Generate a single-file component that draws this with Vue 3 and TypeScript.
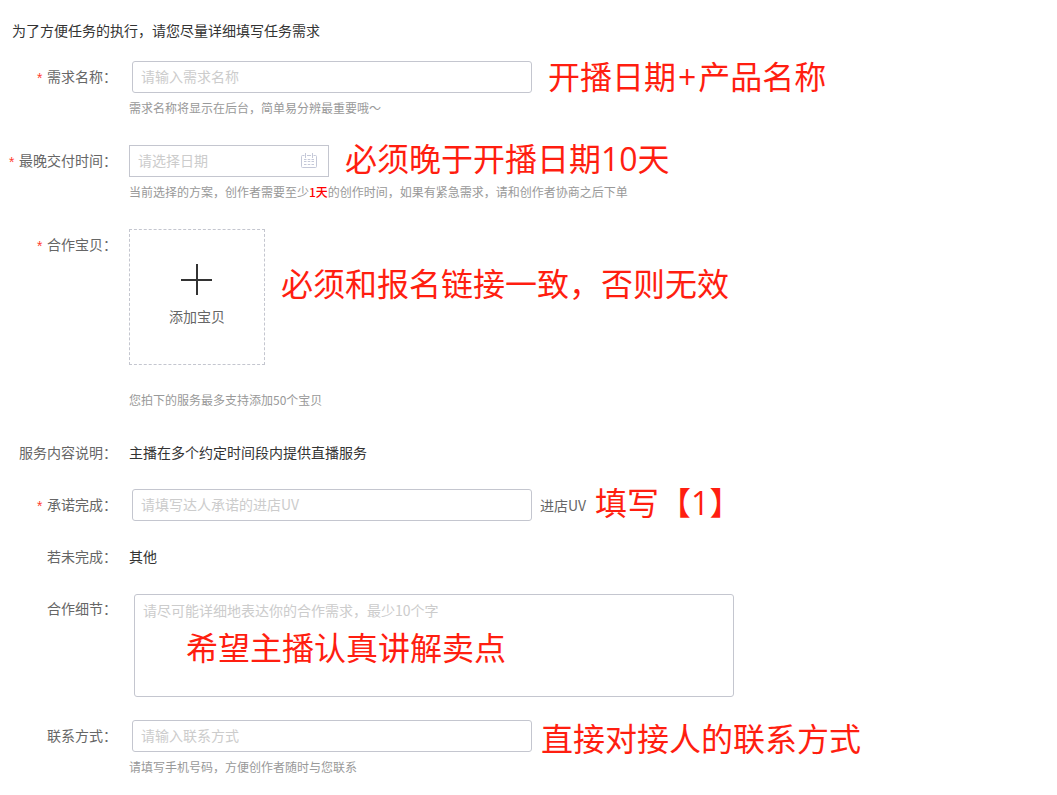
<script setup lang="ts">
import { ref } from 'vue'

const name = ref('')
const date = ref('')
const promise = ref('')
const detail = ref('')
const contact = ref('')
</script>

<template>
  <form class="page" lang="zh-CN" @submit.prevent>
    <p class="intro">为了方便任务的执行，请您尽量详细填写任务需求</p>

    <div class="item">
      <label class="label" for="name"><span class="star">*</span>需求名称：</label>
      <div class="content">
        <div class="line">
          <input id="name" v-model="name" class="field text" type="text" placeholder="请输入需求名称" />
          <span class="note wide">开播日期<span class="sign">+</span>产品名称</span>
        </div>
        <p class="help">需求名称将显示在后台，简单易分辨最重要哦～</p>
      </div>
    </div>

    <div class="item">
      <label class="label" for="date"><span class="star">*</span>最晚交付时间：</label>
      <div class="content">
        <div class="line">
          <div class="picker">
            <input id="date" v-model="date" class="field date" type="text" placeholder="请选择日期" />
            <svg class="calendar" viewBox="0 0 16 16" width="16" height="16" fill="none" stroke="#c4c8d8">
              <path d="M3.5 2.5H1.5a1 1 0 0 0-1 1v10a1 1 0 0 0 1 1h13a1 1 0 0 0 1-1v-10a1 1 0 0 0-1-1h-2M6 2.5h4M4.5 0v5M11.5 0v5" />
              <path d="M3 6.5h10M3 8.5h10M3 11.5h10" stroke-dasharray="2.5 1.25" />
            </svg>
          </div>
          <span class="note wide">必须晚于开播日期10天</span>
        </div>
        <p class="help">当前选择的方案，创作者需要至少<b class="hot">1天</b>的创作时间，如果有紧急需求，请和创作者协商之后下单</p>
      </div>
    </div>

    <div class="item">
      <span class="label"><span class="star">*</span>合作宝贝：</span>
      <div class="content">
        <div class="line top">
          <button class="add" type="button">
            <svg viewBox="0 0 32 32" width="32" height="32" stroke="#333" stroke-width="2">
              <path d="M0 16H31M16 0V31" />
            </svg>
            <span>添加宝贝</span>
          </button>
          <span class="note wide tall">必须和报名链接一致，否则无效</span>
        </div>
        <p class="help far">您拍下的服务最多支持添加50个宝贝</p>
      </div>
    </div>

    <div class="item">
      <span class="label">服务内容说明：</span>
      <div class="content">主播在多个约定时间段内提供直播服务</div>
    </div>

    <div class="item">
      <label class="label" for="promise"><span class="star">*</span>承诺完成：</label>
      <div class="content">
        <div class="line">
          <input id="promise" v-model="promise" class="field text" type="text" placeholder="请填写达人承诺的进店UV" />
          <span class="unit">进店UV</span>
          <span class="note">填写【1】</span>
        </div>
      </div>
    </div>

    <div class="item">
      <span class="label">若未完成：</span>
      <div class="content">其他</div>
    </div>

    <div class="item">
      <label class="label" for="detail">合作细节：</label>
      <div class="content area">
        <textarea id="detail" v-model="detail" class="field" placeholder="请尽可能详细地表达你的合作需求，最少10个字"></textarea>
        <span class="note over">希望主播认真讲解卖点</span>
      </div>
    </div>

    <div class="item">
      <label class="label" for="contact">联系方式：</label>
      <div class="content">
        <div class="line">
          <input id="contact" v-model="contact" class="field text" type="text" placeholder="请输入联系方式" />
          <span class="note low">直接对接人的联系方式</span>
        </div>
        <p class="help">请填写手机号码，方便创作者随时与您联系</p>
      </div>
    </div>
  </form>
</template>

<style>
body {
  margin: 0;
  background: #fff;
}
</style>

<style scoped>
.page,
.field,
.add {
  font-family: 'Noto Sans CJK SC', sans-serif;
  font-size: 14px;
}
.page {
  display: flex;
  flex-direction: column;
  gap: 20px;
  padding-top: 19px;
  color: #333;
  line-height: 30px;
}
p {
  margin: 0;
}
.intro {
  padding-left: 12px;
  line-height: 22px;
}
.item {
  display: flex;
  gap: 12px;
  min-height: 32px;
}
.label {
  flex: none;
  width: 117px;
  text-align: right;
  white-space: nowrap;
  color: #666;
}
.star {
  margin-right: 3px;
  font-family: 'Liberation Mono', monospace;
  line-height: 1;
  vertical-align: -2px;
  color: #ff3b30;
}
.content {
  flex: 1;
  min-width: 0;
}
.line {
  display: flex;
  align-items: center;
}
.top {
  align-items: flex-start;
}
.field {
  box-sizing: border-box;
  margin: 0;
  padding: 0 8px 2px;
  border: 1px solid #c4c6cf;
  border-radius: 3px;
  outline: none;
  background: #fff;
  color: #333;
}
.field::placeholder {
  color: #ccc;
  opacity: 1;
}
.text {
  width: 400px;
  height: 32px;
  margin-left: 3px;
}
.picker {
  position: relative;
  display: flex;
}
.date {
  width: 200px;
  height: 32px;
  border-radius: 0;
}
.calendar {
  position: absolute;
  top: 8px;
  right: 12px;
}
.help {
  margin: 6px 0 8px;
  font-size: 12px;
  line-height: 18px;
  color: #999;
}
.far {
  margin-top: 26px;
}
.hot {
  font-weight: 500;
  color: #f00;
}
.add {
  box-sizing: border-box;
  display: flex;
  flex-direction: column;
  align-items: center;
  gap: 10px;
  width: 136px;
  height: 136px;
  padding: 34px 0 0;
  border: 1px dashed #c4c6cf;
  background: #fff;
  color: #666;
  line-height: 20px;
}
.unit {
  margin-left: 8px;
  color: #666;
}
.note {
  height: 32px;
  margin-left: 9px;
  font-family: 'Open Sans', 'Noto Sans CJK SC', sans-serif;
  font-size: 32px;
  line-height: 28px;
  white-space: nowrap;
  color: #ff1e10;
}
.wide {
  margin-left: 16px;
}
.tall {
  line-height: 110px;
}
.low {
  line-height: 38px;
}
.sign {
  padding: 0 2px;
  line-height: 1;
}
.area {
  position: relative;
  display: flex;
  padding: 1px 0 3px 5px;
}
.area .field {
  width: 600px;
  height: 103px;
  padding: 5px 8px;
  line-height: 20px;
  resize: none;
}
.over {
  position: absolute;
  top: 41px;
  left: 48px;
}
</style>
